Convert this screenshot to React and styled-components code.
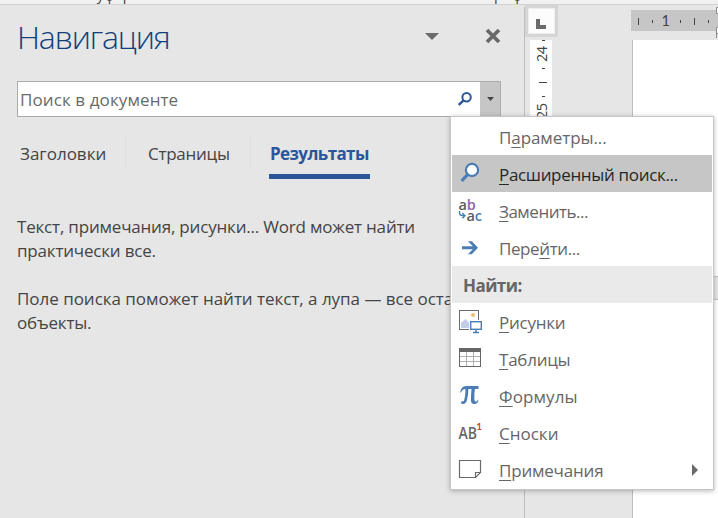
import React from "react";
import styled, { createGlobalStyle, css } from "styled-components";

const GlobalStyle = createGlobalStyle`
  *, *::before, *::after { box-sizing: border-box; }
  body { margin: 0; overflow: hidden; font-family: "Open Sans", "Noto Sans", sans-serif; background: #e6e6e6; }
`;

const Window = styled.div`
  position: relative;
  width: 718px;
  height: 518px;
  display: flex;
  flex-direction: column;
  overflow: hidden;
  background: #e6e6e6;
`;

const Ribbon = styled.div`
  flex: none;
  display: flex;
  align-items: flex-end;
  height: 5px;
  overflow: hidden;
  padding-left: 88px;
  gap: 293px;
  background: #f1f1f1;
  border-bottom: 1px solid #d2d2d2;
`;

const RibbonGroup = styled.span`
  flex: none;
  width: 98px;
  font-size: 14.5px;
  line-height: 20px;
  margin-bottom: -1px;
  white-space: nowrap;
  color: #444;
`;

const Workspace = styled.div`
  flex: 1;
  display: flex;
  min-height: 0;
`;

const Pane = styled.aside`
  flex: none;
  width: 525px;
  margin-top: 2px;
  padding: 0 23px 0 17px;
  border-right: 1px solid #bdbdbd;
`;

const PaneHeader = styled.header`
  display: flex;
  align-items: center;
  height: 60px;
`;

const Title = styled.h1`
  flex: 1;
  margin: 0;
  font-size: 32px;
  line-height: 60px;
  font-weight: 300;
  letter-spacing: -1.15px;
  color: #0f3f7d;
`;

const HeaderIcons = styled.div`
  display: flex;
  align-items: center;
  gap: 46px;
  padding-bottom: 2px;
`;

const SearchBox = styled.div`
  display: flex;
  align-items: center;
  width: 484px;
  height: 36px;
  margin-top: 14px;
  border: 1px solid #ababab;
  background: #fff;
`;

const Placeholder = styled.span`
  flex: 1;
  padding-left: 2px;
  font-size: 17px;
  letter-spacing: 0.1px;
  color: #6a6a6a;
`;

const DropButton = styled.div`
  display: flex;
  align-items: center;
  justify-content: center;
  width: 20px;
  height: 34px;
  margin-left: 8px;
  background: #c6c6c6;
`;

const Tabs = styled.nav`
  display: flex;
  height: 46px;
  margin-top: 19px;
`;

const Tab = styled.div`
  flex: none;
  width: ${(p) => p.$w}px;
  padding-left: ${(p) => p.$pad}px;
  font-size: 17px;
  line-height: 36px;
  white-space: nowrap;
  color: #444;
  letter-spacing: ${(p) => p.$ls || 0}px;
  ${(p) => p.$active && css`
    font-weight: 700;
    color: #2b579a;
    border-bottom: 5px solid #2b579a;
    margin-left: 18px;
    height: 43px;
  `}
`;

const TabDivider = styled.span`
  flex: none;
  width: 1px;
  height: 33px;
  margin-top: 1px;
  background: #dedede;
`;

const Hint = styled.p`
  width: 490px;
  margin: ${(p) => p.$top}px 0 0;
  font-size: 17px;
  line-height: 24px;
  white-space: nowrap;
  color: #444;
`;

const HintLine = styled.span`
  display: block;
  letter-spacing: ${(p) => p.$ls ?? -0.19}px;
`;

const RulerColumn = styled.div`
  flex: none;
  width: 106px;
`;

const TabStop = styled.div`
  width: 33px;
  height: 32px;
  padding: 11px 0 0 8px;
  border: 3px solid #d5d5d5;
  background: #fcfcfc;
  box-shadow: inset 0 0 0 1px #ededed;
`;

const VerticalRuler = styled.svg`
  display: block;
  margin: 3px 0 0 5px;
  background: #fff;
`;

const PageColumn = styled.div`
  flex: 1;
  display: flex;
  flex-direction: column;
`;

const HorizontalRuler = styled.svg`
  flex: none;
  display: block;
  margin-top: 2px;
`;

const Page = styled.div`
  flex: 1;
  margin: 2px 0 0 1px;
  border-left: 1px solid #bdbdbd;
  background: #fff;
`;

const PageMark = styled.div`
  height: 24px;
  margin: 236px 0 0 80px;
  border: solid #bdbdbd;
  border-width: 1px 0;
  background: #e6e6e6;
`;

const Menu = styled.div`
  position: absolute;
  left: 450px;
  top: 116px;
  width: 264px;
  height: 374px;
  padding: 2px 1px;
  border: 1px solid #c6c6c6;
  background: #fff;
  box-shadow: 0 1px 5px rgba(0, 0, 0, 0.28);
`;

const MenuRow = styled.div`
  display: flex;
  align-items: center;
  height: ${(p) => p.$h || 37}px;
  background: ${(p) => (p.$hot ? "#c6c6c6" : "transparent")};
  color: ${(p) => (p.$hot ? "#262626" : "#666")};
  font-size: 17px;
  line-height: 35px;
`;

const MenuHeading = styled(MenuRow)`
  padding: 2px 0 0 11px;
  background: #eaeaea;
  font-weight: 700;
  letter-spacing: -0.55px;
`;

const IconCell = styled.span`
  flex: none;
  display: flex;
  width: 47px;
  height: 37px;
`;

const Label = styled.span`
  flex: 1;
  padding-top: ${(p) => p.$drop ?? 2}px;
  white-space: nowrap;
  letter-spacing: ${(p) => p.$ls || 0}px;
`;

const Key = styled.span`
  text-decoration: underline;
  text-decoration-thickness: 1px;
  text-underline-offset: 3px;
  text-decoration-skip-ink: none;
`;

const Submenu = styled.svg`
  margin: 0 14px 0 0;
`;

/* Each icon is drawn in a 47x37 cell that fills the row's left gutter. */
const icons = {
  search: (
    <g fill="none" stroke="#4a7db5" strokeWidth="2.2">
      <path d="M15.6 19.6 L9.6 26" strokeWidth="3.2" />
      <circle cx="20" cy="15" r="6.1" fill="#fff" />
    </g>
  ),
  replace: (
    <g fontFamily="Open Sans, sans-serif" fontSize="14.5" fontWeight="600">
      <text x="6.5" y="18" fill="#5b5b5b">a</text>
      <text x="14.8" y="18" fill="#9062b3">b</text>
      <text x="14.6" y="28.5" fill="#5b5b5b">a</text>
      <text x="22.8" y="28.5" fill="#4a7db5">c</text>
      <path d="M7.5 19 V20.5 Q7.5 23.5 10 23.5 H12.5 M10.3 21 L13 23.7 L10.3 26.2" fill="none" stroke="#4a7db5" strokeWidth="1.4" />
    </g>
  ),
  go: (
    <g fill="#4a7db5">
      <path d="M10 17.2 H20.8 L16 12.2 H19.8 L26 18.7 L19.8 25.2 H16 L20.8 20.2 H10Z" />
    </g>
  ),
  picture: (
    <g>
      <rect x="7.5" y="7.5" width="19" height="19" fill="#fff" stroke="#6a6a6a" />
      <circle cx="21" cy="12" r="2" fill="#ecc078" />
      <path d="M9 25 V20 L13.2 16 L17.5 20 V25Z" fill="#bdd0e6" />
      <rect x="17" y="17" width="14" height="12" fill="#fff" />
      <rect x="18.7" y="18.7" width="10.6" height="7.6" fill="#fff" stroke="#4a7db5" strokeWidth="1.4" />
      <path d="M24 26.5 V29 M21 29.4 H27" stroke="#4a7db5" strokeWidth="1.5" />
    </g>
  ),
  table: (
    <g fill="none">
      <path d="M14.5 12 V26 M21.5 12 V26 M8 16.5 H28 M8 21.5 H28" stroke="#b0b0b0" />
      <rect x="7.5" y="8.5" width="21" height="18" stroke="#666" />
      <path d="M7 10 H29" stroke="#666" strokeWidth="4" />
    </g>
  ),
  formula: (
    <g fill="#4a7db5">
      <path d="M8 15.4 Q9.5 9 14 9 H26.5 V12 H14 Q10.5 12 8.8 15.4Z" />
      <path d="M13.4 11 H16.4 Q16.5 17 15 23 Q14 27 10.8 27 Q8.6 27 9 25 Q9.6 23.8 11.2 24.5 Q12.3 24.2 13 19 Q13.6 15 13.4 11Z" />
      <path d="M19.6 11 H23 Q22.1 18 22.3 22 Q22.4 25 24.2 24.8 Q25.3 24.4 25.8 22.7 H26.5 Q26 27 22.3 27 Q18.9 27 18.9 22.7 Q18.9 18 19.6 11Z" />
    </g>
  ),
  footnote: (
    <g fontFamily="Open Sans, sans-serif" fontWeight="600">
      <text x="6.5" y="25" fontSize="15.5" fill="#666" textLength="18.5" lengthAdjust="spacingAndGlyphs">AB</text>
      <text x="24.2" y="16" fontFamily="Lato, sans-serif" fontSize="10" fontWeight="700" fill="#d24726">1</text>
    </g>
  ),
  note: (
    <g fill="none" stroke="#6a6a6a" strokeWidth="1.2">
      <path d="M7.5 9.5 H28.5 V21.5 L23.5 26.5 H7.5Z" />
      <path d="M23.5 26.5 V21.5 H28.5" />
    </g>
  ),
};

const items = [
  { pre: "П", key: "а", post: "раметры...", h: 36, drop: 0, ls: -0.08 },
  { key: "Р", post: "асширенный поиск...", icon: "search", hot: true, ls: -0.33 },
  { key: "З", post: "аменить...", icon: "replace", ls: -0.5 },
  { pre: "Пере", key: "й", post: "ти...", icon: "go", ls: -0.4 },
  { heading: "Найти:" },
  { key: "Р", post: "исунки", icon: "picture", ls: -0.25 },
  { key: "Т", post: "аблицы", icon: "table", ls: -0.25 },
  { key: "Ф", post: "ормулы", icon: "formula", ls: 0.1 },
  { key: "С", post: "носки", icon: "footnote" },
  { key: "П", post: "римечания", icon: "note", submenu: true, ls: -0.2 },
];

function MenuItem({ item }) {
  if (item.heading) return <MenuHeading>{item.heading}</MenuHeading>;
  return (
    <MenuRow $hot={item.hot} $h={item.h}>
      <IconCell>
        <svg width="47" height="37">{item.icon && icons[item.icon]}</svg>
      </IconCell>
      <Label $ls={item.ls} $drop={item.drop}>{item.pre}<Key>{item.key}</Key>{item.post}</Label>
      {item.submenu && (
        <Submenu width="6" height="12"><path d="M0 0 L6 6 L0 12Z" fill="#6a6a6a" /></Submenu>
      )}
    </MenuRow>
  );
}

export default function App() {
  return (
    <Window>
      <GlobalStyle />
      <Ribbon>
        <RibbonGroup>Буфер обмена</RibbonGroup>
        <RibbonGroup>Шрифт</RibbonGroup>
      </Ribbon>
      <Workspace>
        <Pane>
          <PaneHeader>
            <Title>Навигация</Title>
            <HeaderIcons>
              <svg width="14" height="7"><path d="M0 0 H14 L7 7Z" fill="#6a6a6a" /></svg>
              <svg width="16" height="16"><path d="M2 2 L14 14 M14 2 L2 14" stroke="#6a6a6a" strokeWidth="3.8" /></svg>
            </HeaderIcons>
          </PaneHeader>
          <SearchBox>
            <Placeholder>Поиск в документе</Placeholder>
            <svg width="14" height="14" fill="none" stroke="#2b579a" strokeWidth="2">
              <circle cx="8.6" cy="5.2" r="4.2" />
              <path d="M5.5 8.3 L0.8 13" strokeWidth="2.4" />
            </svg>
            <DropButton>
              <svg width="7" height="4"><path d="M0 0 H7 L3.5 4Z" fill="#444" /></svg>
            </DropButton>
          </SearchBox>
          <Tabs>
            <Tab $w={108} $pad={3}>Заголовки</Tab>
            <TabDivider />
            <Tab $w={124} $pad={22} $ls={-0.25}>Страницы</Tab>
            <TabDivider />
            <Tab $w={101} $pad={1} $ls={-0.6} $active>Результаты</Tab>
          </Tabs>
          <Hint $top={33}>
            <HintLine>Текст, примечания, рисунки... Word может найти</HintLine>
            <HintLine>практически все.</HintLine>
          </Hint>
          <Hint $top={24}>
            <HintLine $ls={-0.03}>Поле поиска поможет найти текст, а лупа — все остальные</HintLine>
            <HintLine>объекты.</HintLine>
          </Hint>
        </Pane>
        <RulerColumn>
          <TabStop>
            <svg width="10" height="10" display="block"><path d="M0 0 H4 V6 H10 V10 H0Z" fill="#6a6a6a" /></svg>
          </TabStop>
          <VerticalRuler width="22" height="300">
            <g stroke="#444">
              <path d="M12 0.5 H15 M12 28.5 H15 M9 42.5 H17 M12 56.5 H15" />
            </g>
            <g fontFamily="Open Sans, sans-serif" fontSize="14.5" fill="#444">
              <text transform="translate(17 22) rotate(-90)" textLength="16">24</text>
              <text transform="translate(17 79) rotate(-90)" textLength="16">25</text>
            </g>
          </VerticalRuler>
        </RulerColumn>
        <PageColumn>
          <HorizontalRuler width="87" height="31">
            <rect x="0" y="3" width="87" height="21" fill="#c6c6c6" />
            <path d="M7.5 11 V18 M21.5 13 V16 M49.5 13 V16 M63.5 11 V18 M77.5 13 V16" stroke="#444" />
            <text x="30.5" y="19" fontFamily="Lato, sans-serif" fontSize="14.5" fill="#444">1</text>
            <path d="M88 0.5 H85.5 V6.5 H88 M88 20.5 H85.5 V32 M86 26.5 H88" fill="#fff" stroke="#8a8a8a" />
          </HorizontalRuler>
          <Page><PageMark /></Page>
        </PageColumn>
      </Workspace>
      <Menu>
        {items.map((item) => (
          <MenuItem key={item.heading || item.post} item={item} />
        ))}
      </Menu>
    </Window>
  );
}
